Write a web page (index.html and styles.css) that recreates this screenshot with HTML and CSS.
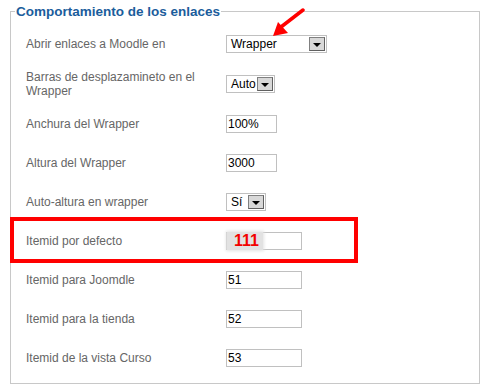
FILE: index.html
```html
<!DOCTYPE html>
<html>
  <head>
    <meta charset="utf-8">
    <title>Comportamiento de los enlaces</title>
    <link rel="stylesheet" href="styles.css">
  </head>
  <body>
    <fieldset class="panel">
      <legend>Comportamiento de los enlaces</legend>

      <div class="row first">
        <label>Abrir enlaces a Moodle en</label>
        <div class="select wide"><span>Wrapper</span><b class="btn"></b></div>
      </div>
      <div class="row tall">
        <label>Barras de desplazamineto en el<br>Wrapper</label>
        <div class="select auto"><span>Auto</span><b class="btn"></b></div>
      </div>
      <div class="row">
        <label>Anchura del Wrapper</label>
        <input class="field short" type="text" value="100%">
      </div>
      <div class="row">
        <label>Altura del Wrapper</label>
        <input class="field short" type="text" value="3000">
      </div>
      <div class="row">
        <label>Auto-altura en wrapper</label>
        <div class="select yes"><span>Sí</span><b class="btn"></b></div>
      </div>
      <div class="row">
        <label>Itemid por defecto</label>
        <div class="holder">
          <input class="field long" type="text" value="">
          <span class="stamp">111</span>
        </div>
      </div>
      <div class="row">
        <label>Itemid para Joomdle</label>
        <input class="field long" type="text" value="51">
      </div>
      <div class="row">
        <label>Itemid para la tienda</label>
        <input class="field long" type="text" value="52">
      </div>
      <div class="row">
        <label>Itemid de la vista Curso</label>
        <input class="field long" type="text" value="53">
      </div>
    </fieldset>

    <div class="mark"></div>

    <svg class="arrow" width="40" height="32" viewBox="0 0 40 32">
      <line x1="34" y1="2" x2="12" y2="19" stroke="#f00" stroke-width="3.5" stroke-linecap="round"/>
      <polygon points="4,28 9,14 19,25" fill="#f00"/>
    </svg>
  </body>
</html>
```

FILE: styles.css
```css
html, body {
  margin: 0;
  padding: 0;
  background: #fff;
  font-family: "Liberation Sans", Arial, sans-serif;
  font-size: 12px;
}

body {
  position: relative;
  width: 489px;
  height: 388px;
  overflow: hidden;
}

.panel {
  box-sizing: border-box;
  width: 470px;
  margin: 4px 0 0 10px;
  padding: 5px 0 6px 15px;
  border: 1px solid #c8c8c8;
}

.panel legend {
  margin-left: -11px;
  padding: 0 1px;
  color: #1b5d9c;
  font-size: 13.5px;
  font-weight: bold;
  line-height: 15px;
}

.row {
  display: flex;
  align-items: center;
  height: 39px;
}

.row.tall {
  height: 41px;
}

.row label {
  width: 200px;
  color: #666;
  line-height: 14px;
}

.field {
  box-sizing: border-box;
  height: 18px;
  margin: 0;
  padding: 0 1px;
  border: 1px solid #c0c0c0;
  font-family: "Liberation Sans", Arial, sans-serif;
  font-size: 12px;
  color: #000;
  outline: none;
}

.field.short { width: 51px; }
.field.long  { width: 76px; }

.select {
  box-sizing: border-box;
  display: flex;
  align-items: center;
  justify-content: space-between;
  height: 18px;
  padding: 0 1px 0 4px;
  border: 1px solid #c0c0c0;
  color: #000;
}

.select.wide { width: 101px; }
.select.auto { width: 49px; }
.select.yes  { width: 40px; }

.btn {
  position: relative;
  box-sizing: border-box;
  width: 16px;
  height: 14px;
  background: #d8d8d8;
  border: 1px solid #808080;
  border-right-color: #606060;
  border-bottom-color: #606060;
}

.btn::after {
  content: "";
  position: absolute;
  left: 3px;
  top: 5px;
  border-left: 4px solid transparent;
  border-right: 4px solid transparent;
  border-top: 4px solid #000;
}

.holder {
  position: relative;
  display: flex;
}

.stamp {
  position: absolute;
  left: 1px;
  top: 0;
  height: 18px;
  padding: 0 4px 0 7px;
  background: #e2e2e2;
  box-shadow: 0 0 3px 1px #e2e2e2;
  color: #f20000;
  font-size: 16px;
  font-weight: bold;
  line-height: 18px;
}

.mark {
  position: absolute;
  left: 10px;
  top: 217px;
  box-sizing: border-box;
  width: 348px;
  height: 46px;
  border: 4px solid #f00;
}

.arrow {
  position: absolute;
  left: 269px;
  top: 8px;
}
```
